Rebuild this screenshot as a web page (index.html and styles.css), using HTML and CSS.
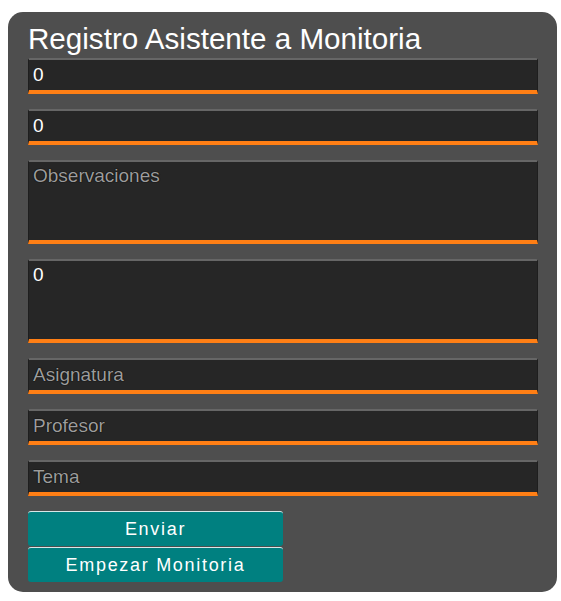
FILE: index.html
```html
<!DOCTYPE html>
<html lang="es">
<head>
<meta charset="utf-8">
<title>Registro Asistente a Monitoria</title>
<link rel="stylesheet" href="styles.css">
</head>
<body>
<form class="panel">
  <h1 class="title">Registro Asistente a Monitoria</h1>
  <input class="field" type="text" value="0">
  <input class="field" type="text" value="0">
  <textarea class="field area" placeholder="Observaciones"></textarea>
  <textarea class="field area">0</textarea>
  <input class="field" type="text" placeholder="Asignatura">
  <input class="field" type="text" placeholder="Profesor">
  <input class="field" type="text" placeholder="Tema">
  <div class="actions">
    <button class="btn" type="button">Enviar</button>
    <button class="btn" type="button">Empezar Monitoria</button>
  </div>
</form>
</body>
</html>
```

FILE: styles.css
```css
html, body {
  margin: 0;
  padding: 0;
  background: #ffffff;
}

.panel {
  box-sizing: border-box;
  width: 549px;
  margin: 12px 0 0 8px;
  padding: 11px 19px 10px 20px;
  background: #4e4e4e;
  border-radius: 15px;
  font-family: "Liberation Sans", Arial, sans-serif;
  display: flex;
  flex-direction: column;
}

.title {
  margin: 0 0 3px 0;
  font-size: 29.6px;
  line-height: 32px;
  font-weight: normal;
  color: #ffffff;
  white-space: nowrap;
}

.field {
  box-sizing: border-box;
  display: block;
  width: 510px;
  height: 36px;
  margin: 0 0 15px 0;
  padding: 0 4px;
  background: #262626;
  border: 1px solid #1e1e1e;
  border-top: 2px solid #666666;
  border-bottom: 4px solid #ff7f15;
  border-radius: 2px 2px 0 0;
  color: #ffffff;
  font-family: "Liberation Sans", Arial, sans-serif;
  font-size: 19px;
  outline: none;
  resize: none;
}

.area {
  height: 84px;
  padding: 3px 4px;
  line-height: normal;
  overflow: hidden;
}

.field::placeholder {
  color: #9c9c9c;
  opacity: 1;
  text-shadow: 0 0 1px #000000, 0 0 1px #000000;
}

.actions {
  display: flex;
  flex-direction: column;
  gap: 1px;
  align-items: flex-start;
}

.btn {
  box-sizing: border-box;
  width: 255px;
  height: 35px;
  margin: 0;
  padding: 0;
  background: #008080;
  border: none;
  border-top: 1px solid #d8e8e8;
  border-radius: 3px;
  color: #ffffff;
  font-family: "Liberation Sans", Arial, sans-serif;
  font-size: 18px;
  letter-spacing: 1.7px;
  cursor: pointer;
}
```
